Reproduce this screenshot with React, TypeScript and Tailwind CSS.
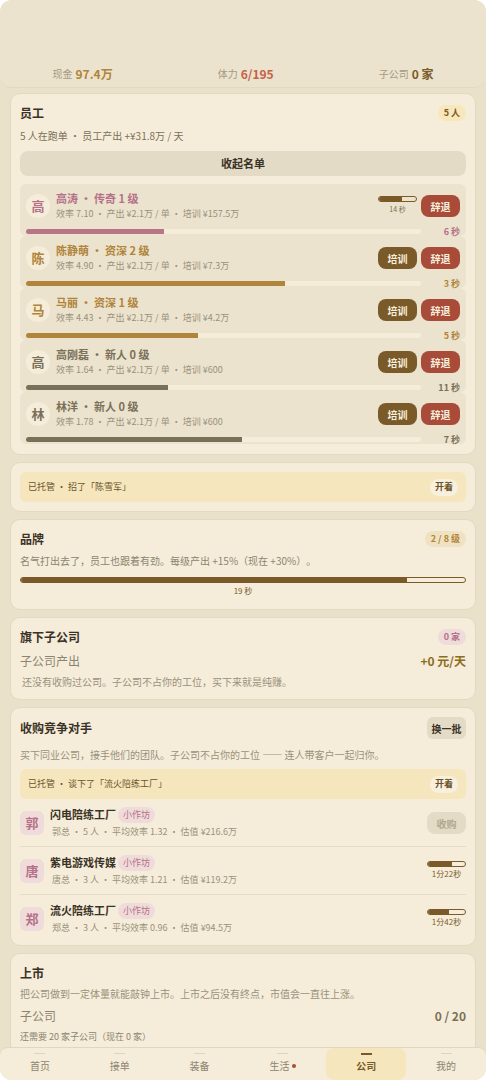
import React from 'react';
import clsx from 'clsx';

interface Employee {
  name: string;
  rank: string;
  rate: string;
  cost: string;
  progress: number;
  left: string;
  tone: 'legend' | 'senior' | 'rookie';
  training?: { percent: number; left: string };
}

interface Rival {
  boss: string;
  name: string;
  info: string;
  deal?: { percent: number; left: string };
}

const employees: Employee[] = [
  { name: '高涛', rank: '传奇 1 级', rate: '7.10', cost: '157.5万', progress: 35, left: '6 秒', tone: 'legend', training: { percent: 63, left: '14 秒' } },
  { name: '陈静萌', rank: '资深 2 级', rate: '4.90', cost: '7.3万', progress: 65.5, left: '3 秒', tone: 'senior' },
  { name: '马丽', rank: '资深 1 级', rate: '4.43', cost: '4.2万', progress: 43.5, left: '5 秒', tone: 'senior' },
  { name: '高刚磊', rank: '新人 0 级', rate: '1.64', cost: '600', progress: 36, left: '11 秒', tone: 'rookie' },
  { name: '林洋', rank: '新人 0 级', rate: '1.78', cost: '600', progress: 54.7, left: '7 秒', tone: 'rookie' },
];

const rivals: Rival[] = [
  { boss: '郭', name: '闪电陪练工厂', info: '郭总 · 5 人 · 平均效率 1.32 · 估值 ¥216.6万' },
  { boss: '唐', name: '紫电游戏传媒', info: '唐总 · 3 人 · 平均效率 1.21 · 估值 ¥119.2万', deal: { percent: 66, left: '1分22秒' } },
  { boss: '郑', name: '流火陪练工厂', info: '郑总 · 3 人 · 平均效率 0.96 · 估值 ¥94.5万', deal: { percent: 58, left: '1分42秒' } },
];

const tabs = [
  { label: '首页' },
  { label: '接单' },
  { label: '装备' },
  { label: '生活', dot: true },
  { label: '公司', active: true },
  { label: '我的' },
];

const toneText = {
  legend: 'text-[#b5718a]',
  senior: 'text-[#b0843a]',
  rookie: 'text-[#7a7059]',
};

const toneBar = {
  legend: 'bg-[#b87585]',
  senior: 'bg-[#b0843a]',
  rookie: 'bg-[#7a7059]',
};

const Card: React.FC<{ children: React.ReactNode }> = ({ children }) => (
  <section className="shrink-0 rounded-[10px] border border-[#e2d9c0] bg-[#f5edda] p-[9px]">{children}</section>
);

const CardHeader: React.FC<{ title: string; children?: React.ReactNode }> = ({ title, children }) => (
  <div className="flex min-h-5 items-center justify-between">
    <h2 className="text-[12px] leading-5 font-bold text-[#3a3226]">{title}</h2>
    {children}
  </div>
);

const Pill: React.FC<{ className: string; children: React.ReactNode }> = ({ className, children }) => (
  <span className={clsx('rounded-full text-[9px] leading-4', className)}>{children}</span>
);

const Meter: React.FC<{ percent: number; label: string }> = ({ percent, label }) => (
  <div
    role="progressbar"
    aria-label={label}
    aria-valuenow={percent}
    className="h-[6px] w-full overflow-hidden rounded-[3px] border border-[#7a5a28]"
  >
    <div className="h-full bg-[#7a5a28]" style={{ width: `${percent}%` }} />
  </div>
);

const AutoBanner: React.FC<{ text: string }> = ({ text }) => (
  <div className="flex h-[30px] items-center justify-between rounded-md bg-[#f6e6be] px-2 text-[9px] text-[#6b5228]">
    <span>{text}</span>
    <button className="h-[17px] rounded-full bg-[#f8f0de] px-[5px] font-bold">开着</button>
  </div>
);

const EmployeeRow: React.FC<{ employee: Employee }> = ({ employee: e }) => (
  <li className="rounded-md bg-[#ebe3cd] px-[6px] pt-[6px] pb-[2px]">
    <div className="flex items-center gap-[6px]">
      <span className={clsx('flex size-6 shrink-0 items-center justify-center rounded-full bg-[#f5edda] text-[13px] font-bold', toneText[e.tone])}>
        {e.name[0]}
      </span>
      <div className="min-w-0 flex-1">
        <p className={clsx('text-[11px] leading-4 font-bold', toneText[e.tone])}>
          {e.name} · {e.rank}
        </p>
        <p className="text-[9px] leading-4 text-[#9a917b]">
          效率 {e.rate} · 产出 ¥2.1万 / 单 · 培训 ¥{e.cost}
        </p>
      </div>
      <div className="flex items-center gap-1 text-[10px] font-bold text-[#f8f0de]">
        {e.training ? (
          <div className="w-[39px] text-center text-[7px] leading-[14px] font-normal text-[#7a7059]">
            <Meter percent={e.training.percent} label="培训" />
            {e.training.left}
          </div>
        ) : (
          <button className="h-[22px] w-[39px] rounded-lg bg-[#7a5a28]">培训</button>
        )}
        <button className="h-[22px] w-[39px] rounded-lg bg-[#a84b39]">辞退</button>
      </div>
    </div>
    <div className="mt-[7px] flex h-[5px] items-center">
      <div role="progressbar" aria-label={e.name} aria-valuenow={e.progress} className="h-[5px] flex-1 overflow-hidden rounded-full bg-[#f5edda]">
        <div className={clsx('h-full', toneBar[e.tone])} style={{ width: `${e.progress}%` }} />
      </div>
      <span className={clsx('w-[39px] text-right text-[9px] leading-[5px] font-bold', toneText[e.tone])}>{e.left}</span>
    </div>
  </li>
);

const RivalRow: React.FC<{ rival: Rival }> = ({ rival: r }) => (
  <li className="flex items-center gap-[6px] border-b border-[#e6dcc5] pt-[7px] pb-[6px] last:border-0 last:pb-0">
    <span className="flex size-6 shrink-0 items-center justify-center rounded-md bg-[#efdcda] text-[13px] font-bold text-[#b5718a]">{r.boss}</span>
    <div className="min-w-0 flex-1">
      <div className="flex h-[17px] items-center gap-[2px]">
        <h3 className="text-[11px] font-bold text-[#3a3226]">{r.name}</h3>
        <Pill className="bg-[#efdcda] px-[5px] text-[#b5718a]">小作坊</Pill>
      </div>
      <p className="pl-[2px] text-[9px] leading-[17px] text-[#9a917b]">{r.info}</p>
    </div>
    {r.deal ? (
      <div className="w-[39px] text-center text-[8px] leading-[14px] text-[#7a5a28]">
        <Meter percent={r.deal.percent} label={r.name} />
        {r.deal.left}
      </div>
    ) : (
      <button disabled className="h-[22px] w-[39px] rounded-lg bg-[#e3dbc5] text-[10px] font-bold text-[#b0a790]">
        收购
      </button>
    )}
  </li>
);

const Stat: React.FC<{ label: string; value: string; color: string }> = ({ label, value, color }) => (
  <div className="flex flex-auto items-center justify-center gap-[3px] leading-5">
    <span className="text-[10px] text-[#a39a84]">{label}</span>
    <span className={clsx('text-[12px] font-bold', color)}>{value}</span>
  </div>
);

export default function App() {
  return (
    <div className="h-screen bg-white font-['Noto_Sans_CJK_SC',sans-serif] [text-spacing-trim:space-all]" lang="zh-CN">
      <div className="flex h-full flex-col overflow-hidden rounded-xl bg-[#e9e1c9]">
        <header className="flex shrink-0 rounded-b-xl border-b border-[#e2d9c0] bg-[#ebe3cd] pt-16 pb-[3px]">
          <Stat label="现金" value="97.4万" color="text-[#b0843a]" />
          <Stat label="体力" value="6/195" color="text-[#c4614a]" />
          <Stat label="子公司" value="0 家" color="text-[#7a5a28]" />
        </header>

        <main className="flex min-h-0 flex-1 flex-col gap-[7px] overflow-y-auto px-[10px] pt-[5px] [scrollbar-width:none]">
          <Card>
            <CardHeader title="员工">
              <Pill className="bg-[#f8e7bb] px-[6px] font-bold text-[#7a5a28]">5 人</Pill>
            </CardHeader>
            <p className="mt-[5px] mb-[7px] text-[10px] leading-4 text-[#7a7059]">5 人在跑单 · 员工产出 +¥31.8万 / 天</p>
            <button className="block h-[25px] w-full rounded-lg bg-[#e3dbc5] text-[11px] font-bold text-[#3a3226]">收起名单</button>
            <ul className="pt-2 pb-px">
              {employees.map(e => (
                <EmployeeRow key={e.name} employee={e} />
              ))}
            </ul>
          </Card>

          <Card>
            <AutoBanner text="已托管 · 招了「陈雪军」" />
          </Card>

          <Card>
            <CardHeader title="品牌">
              <Pill className="bg-[#efe2c2] px-[6px] font-bold text-[#b0843a]">2 / 8 级</Pill>
            </CardHeader>
            <p className="mt-1 mb-2 text-[10px] leading-4 text-[#8c8470]">名气打出去了，员工也跟着有劲。每级产出 +15%（现在 +30%）。</p>
            <Meter percent={87} label="品牌升级" />
            <p className="pb-[2px] text-center text-[8px] leading-[15px] text-[#7a5a28]">19 秒</p>
          </Card>

          <Card>
            <CardHeader title="旗下子公司">
              <Pill className="bg-[#efdcda] px-[6px] font-bold text-[#b5718a]">0 家</Pill>
            </CardHeader>
            <div className="mt-1 flex items-center justify-between text-[12px] leading-5">
              <span className="text-[#8c8470]">子公司产出</span>
              <span className="font-bold text-[#8c6c1a]">+0 元/天</span>
            </div>
            <p className="mt-[3px] pl-[2px] text-[10px] leading-4 text-[#9a917b]">还没有收购过公司。子公司不占你的工位，买下来就是纯赚。</p>
          </Card>

          <Card>
            <CardHeader title="收购竞争对手">
              <button className="h-[22px] w-[39px] rounded-md bg-[#e3dbc5] text-[10px] font-bold text-[#3a3226]">换一批</button>
            </CardHeader>
            <p className="mt-2 mb-[6px] text-[10px] leading-4 text-[#9a917b]">
              买下同业公司，接手他们的团队。子公司不占你的工位 —— 连人带客户一起归你。
            </p>
            <AutoBanner text="已托管 · 谈下了「流火陪练工厂」" />
            <ul>
              {rivals.map(r => (
                <RivalRow key={r.boss} rival={r} />
              ))}
            </ul>
          </Card>

          <Card>
            <CardHeader title="上市" />
            <p className="mt-[3px] text-[10px] leading-4 text-[#9a917b]">把公司做到一定体量就能敲钟上市。上市之后没有终点，市值会一直往上涨。</p>
            <div className="mt-1 flex items-center justify-between text-[12px] leading-5">
              <span className="text-[#8c8470]">子公司</span>
              <span className="font-bold text-[#7a7059]">0 / 20</span>
            </div>
            <p className="mt-[3px] text-[9px] leading-4 text-[#8c8470]">还需要 20 家子公司（现在 0 家）</p>
          </Card>
        </main>

        <nav className="flex h-[33px] shrink-0 rounded-t-lg border-t border-[#e0d7be] bg-[#f5edda]">
          {tabs.map(tab => (
            <a
              key={tab.label}
              href="#"
              className={clsx(
                'flex flex-auto flex-col items-center rounded-lg pt-[5px] text-[10px] leading-4',
                tab.active ? 'bg-[#f6e6be] font-bold text-[#7a5a28]' : 'text-[#8c8470]'
              )}
            >
              <span className={clsx('w-[11px]', tab.active ? 'h-[2px] bg-[#7a5a28]' : 'h-px bg-[#ddd4bd]')} />
              <span className={clsx('flex items-center gap-[3px]', tab.active ? 'mt-[3px]' : 'mt-1')}>
                {tab.label}
                {tab.dot && <i className="size-1 rounded-full bg-[#a84b39]" />}
              </span>
            </a>
          ))}
        </nav>
      </div>
    </div>
  );
}
